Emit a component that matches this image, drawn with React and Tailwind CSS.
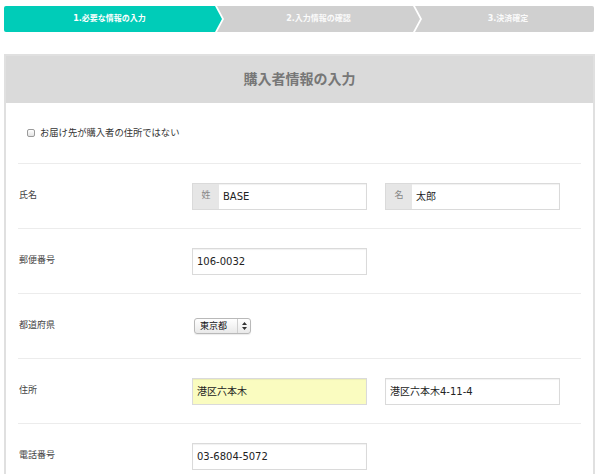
import React from 'react';

const FONT = "font-['DejaVu_Sans','Noto_Sans_CJK_JP',sans-serif]";

// chevron steps: first has a point only, the rest are notched on the left too
const STEPS = [
  { label: '1.必要な情報の入力', active: true, w: 'w-[218px]' },
  { label: '2.入力情報の確認', w: 'w-[203px]' },
  { label: '3.決済確定', last: true, w: 'w-[179px]' }
];

function StepBar() {
  return (
    <div className="flex h-[26px]">
      {STEPS.map((s, i) => (
        <div
          key={s.label}
          className={
            'flex h-full items-center justify-center text-[8px] font-bold text-white ' +
            s.w +
            ' ' +
            (s.active ? 'bg-[#00ccb8] ' : 'bg-[#d0d0d0] ') +
            (i > 0 ? '-ml-[5px] ' : 'rounded-l-[2px] ') +
            (i === 0
              ? '[clip-path:polygon(0_0,calc(100%_-_7px)_0,100%_50%,calc(100%_-_7px)_100%,0_100%)] pr-[7px]'
              : s.last
              ? '[clip-path:polygon(0_0,100%_0,100%_100%,0_100%,7px_50%)] rounded-r-[2px] pl-[7px]'
              : '[clip-path:polygon(0_0,calc(100%_-_7px)_0,100%_50%,calc(100%_-_7px)_100%,0_100%,7px_50%)] pl-[7px] pr-[7px]')
          }
        >
          <span className={s.active ? '' : 'opacity-90'}>{s.label}</span>
        </div>
      ))}
    </div>
  );
}

function Field({ value, prefix, yellow }) {
  return (
    <div
      className={
        'flex h-[27px] w-[175px] border border-[#dadada] shadow-[inset_0_1px_1px_rgba(0,0,0,0.06)] ' +
        (yellow ? 'bg-[#fafcc0]' : 'bg-white')
      }
    >
      {prefix && (
        <span className="flex w-[26px] shrink-0 items-center justify-center bg-[#e6e6e6] text-[9px] text-[#888]">
          {prefix}
        </span>
      )}
      <span className="flex items-center pl-[4px] text-[10px] text-[#222]">{value}</span>
    </div>
  );
}

function Select() {
  return (
    <div className="ml-[2px] flex h-[16px] w-[57px] items-center rounded-[3px] border border-[#b9b9b9] bg-gradient-to-b from-white to-[#e9e9e9] shadow-[0_1px_1px_rgba(0,0,0,0.08)]">
      <span className="flex-1 pl-[5px] text-[9px] leading-none text-[#111]">東京都</span>
      <span className="flex h-full w-[13px] items-center justify-center border-l border-[#cfcfcf]">
        <svg width="5" height="8" viewBox="0 0 5 8">
          <path d="M2.5 0 L5 3 H0 Z M2.5 8 L5 5 H0 Z" fill="#333" />
        </svg>
      </span>
    </div>
  );
}

function Row({ label, children }) {
  return (
    <div className="flex h-[65px] items-center border-t border-[#ececec]">
      <span className="w-[174px] shrink-0 pl-[1px] text-[9px] text-[#444]">{label}</span>
      <div className="flex items-center gap-[18px]">{children}</div>
    </div>
  );
}

export default function App() {
  return (
    <div className={'h-[474px] w-[599px] overflow-hidden bg-white px-[4px] pt-[6px] ' + FONT}>
      <StepBar />

      <div className="mt-[22px] border-2 border-[#e0e0e0]">
        <div className="flex h-[47px] items-center justify-center bg-[#dadada] text-[14px] font-bold text-[#777]">
          購入者情報の入力
        </div>

        <div className="px-[12px]">
          <div className="flex h-[60px] items-center gap-[5px] pl-[9px]">
            <span className="h-[8px] w-[8px] rounded-[2px] border border-[#9a9a9a] bg-gradient-to-b from-white to-[#e4e4e4]" />
            <span className="text-[9.3px] text-[#333]">お届け先が購入者の住所ではない</span>
          </div>

          <Row label="氏名">
            <Field prefix="姓" value="BASE" />
            <Field prefix="名" value="太郎" />
          </Row>
          <Row label="郵便番号">
            <Field value="106-0032" />
          </Row>
          <Row label="都道府県">
            <Select />
          </Row>
          <Row label="住所">
            <Field yellow value="港区六本木" />
            <Field value="港区六本木4-11-4" />
          </Row>
          <Row label="電話番号">
            <Field value="03-6804-5072" />
          </Row>
        </div>
      </div>
    </div>
  );
}
